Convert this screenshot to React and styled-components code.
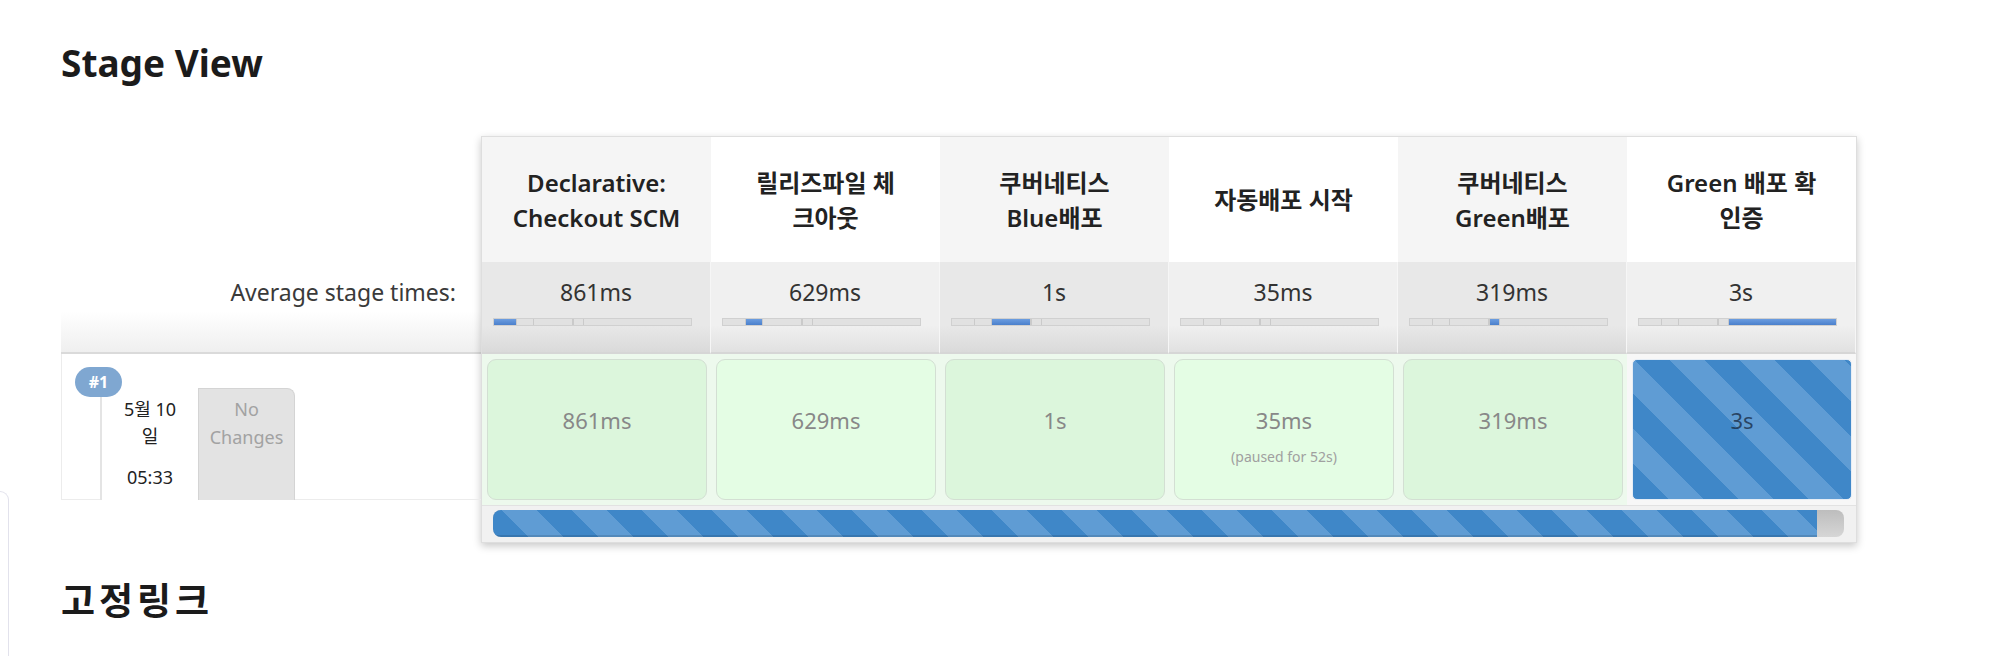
import React from 'react';
import styled, { createGlobalStyle } from 'styled-components';

const GlobalStyle = createGlobalStyle`
  html, body {
    margin: 0;
    padding: 0;
    background: #fff;
  }
  body {
    font-family: "Noto Sans", "Noto Sans CJK KR", sans-serif;
    color: #222;
  }
`;

const stripes = `repeating-linear-gradient(45deg, #3f87c8 0 24.75px, #5f9cd4 24.75px 49.5px)`;

const stages = [
  { name: ['Declarative:', 'Checkout SCM'], avg: '861ms', time: '861ms', width: 11.4 },
  { name: ['릴리즈파일 체', '크아웃'], avg: '629ms', time: '629ms', width: 8.6 },
  { name: ['쿠버네티스', 'Blue배포'], avg: '1s', time: '1s', width: 19.5 },
  { name: ['자동배포 시작'], avg: '35ms', time: '35ms', paused: '(paused for 52s)', width: 0.5 },
  { name: ['쿠버네티스', 'Green배포'], avg: '319ms', time: '319ms', width: 5 },
  { name: ['Green 배포 확', '인증'], avg: '3s', time: '3s', width: 55, running: true },
];

const Page = styled.div`
  display: flex;
  min-height: 656px;
`;

const SidePanel = styled.div`
  flex: 0 0 9px;
  box-sizing: border-box;
  margin-top: 491px;
  border-top: 1px solid #e2e2ec;
  border-right: 1px solid #e2e2ec;
  border-top-right-radius: 14px;
`;

const Main = styled.main`
  flex: 1;
  padding-left: 52px;
`;

const Heading = styled.h2`
  margin: ${p => p.$top}px 0 ${p => p.$bottom}px;
  font-size: 37px;
  line-height: 44px;
  font-weight: 700;
  letter-spacing: ${p => p.$spacing || 0}px;
  color: #1b1b1b;
`;

const StageView = styled.div`
  display: flex;
  align-items: flex-start;
`;

const LeftPane = styled.div`
  flex: 0 0 420px;
`;

const LeftHead = styled.div`
  height: 126px;
`;

const AvgLabel = styled.div`
  height: 92px;
  box-sizing: border-box;
  padding: 15px 25px 0 0;
  text-align: right;
  font-size: 23px;
  line-height: 30px;
  color: #3a3a3a;
  background: linear-gradient(to bottom, #fff 55%, #efefef 100%);
  border-bottom: 2px solid #dadada;
`;

const RunInfo = styled.div`
  position: relative;
  height: 146px;
  box-sizing: border-box;
  display: flex;
  align-items: flex-start;
  padding: 35px 0 0 38px;
  border-left: 1px solid #ececec;
  border-bottom: 1px solid #ececec;
`;

const Badge = styled.span`
  position: absolute;
  left: 13px;
  top: 13px;
  width: 47px;
  height: 30px;
  border-radius: 15px;
  background: #7fa7d1;
  color: #fff;
  font-size: 16px;
  font-weight: 700;
  line-height: 30px;
  text-align: center;
`;

const DateBox = styled.div`
  width: 98px;
  height: 111px;
  box-sizing: border-box;
  padding-top: 7px;
  border-left: 2px solid #e4e4e4;
  background: #fff;
  text-align: center;
  font-size: 18px;
  line-height: 27px;
  color: #222;
`;

const TimeLine = styled.div`
  margin-top: 14px;
`;

const NoChanges = styled.div`
  width: 97px;
  height: 112px;
  margin-top: -1px;
  box-sizing: border-box;
  padding-top: 6px;
  background: #e3e3e3;
  border: 1px solid #d4d4d4;
  border-bottom: none;
  border-top-right-radius: 8px;
  text-align: center;
  font-size: 18px;
  line-height: 28px;
  color: #a2a2a2;
`;

const StageTable = styled.div`
  flex: 0 0 1376px;
  box-sizing: border-box;
  display: grid;
  grid-template-columns: repeat(6, 1fr);
  border: 1px solid #dedede;
  box-shadow: 0 3px 8px rgba(0, 0, 0, 0.22);
  background: #fff;
`;

const HeadCell = styled.div`
  height: 125px;
  box-sizing: border-box;
  padding: 0 10px;
  display: flex;
  flex-direction: column;
  align-items: center;
  justify-content: center;
  text-align: center;
  font-size: 24px;
  line-height: 35px;
  font-weight: 600;
  color: #222;
  white-space: nowrap;
  background: ${p => (p.$odd ? '#f5f5f5' : '#fff')};
`;

const AvgCell = styled.div`
  height: 92px;
  box-sizing: border-box;
  padding-top: 15px;
  text-align: center;
  font-size: 23px;
  line-height: 30px;
  color: #333;
  border-right: 1px solid #f6f6f6;
  border-bottom: 2px solid #d6d6d6;
  background: ${p =>
    p.$odd
      ? 'linear-gradient(to bottom, #e8e8e8 0%, #e8e8e8 70%, #dadada 100%)'
      : 'linear-gradient(to bottom, #f0f0f0 0%, #f0f0f0 70%, #e1e1e1 100%)'};
`;

const Bar = styled.div`
  display: flex;
  height: 8px;
  margin: 11px 18px 0 11px;
  box-sizing: border-box;
  background: #e1e1e1;
  border: 1px solid #d0d0d0;
`;

const Seg = styled.div`
  flex: 0 0 auto;
  min-width: 1px;
  box-sizing: border-box;
  border-left: 1px solid ${p => (p.$first ? 'transparent' : '#cacaca')};
  background: ${p => (p.$active ? 'linear-gradient(#6c9de0, #4b80cc)' : 'transparent')};
`;

const RunCol = styled.div`
  padding: 5px 4px 5px 5px;
  background: ${p => (p.$running ? '#f7f7f7' : '#edf9ed')};
`;

const StageCell = styled.div`
  height: 141px;
  box-sizing: border-box;
  padding-top: 45px;
  border-radius: ${p => (p.$running ? '5px' : '9px')};
  border: 1px solid ${p => (p.$running ? '#e6edf5' : '#d3dfd3')};
  background: ${p => (p.$running ? stripes : p.$odd ? '#dcf6dc' : '#e4fde4')};
  text-align: center;
  color: ${p => (p.$running ? 'rgba(25, 45, 70, 0.78)' : '#888')};
`;

const Duration = styled.div`
  font-size: 22px;
  line-height: 30px;
`;

const Paused = styled.div`
  margin-top: 13px;
  font-size: 14px;
  line-height: 18px;
  color: #a0a0a0;
`;

const ProgressRow = styled.div`
  grid-column: 1 / -1;
  padding: 4px 12px 5px 11px;
  background: #f1f1f1;
  border-top: 1px solid #e2e2e2;
`;

const Track = styled.div`
  display: flex;
  height: 27px;
  border-radius: 8px;
  overflow: hidden;
  background: linear-gradient(#bdbdbd, #d6d6d6);
`;

const Fill = styled.div`
  width: 98%;
  background: ${stripes};
  box-shadow: inset 0 -2px 0 rgba(0, 0, 0, 0.12);
`;

const AvgBar = ({ active }) => (
  <Bar>
    {stages.map((s, i) => (
      <Seg key={i} $first={i === 0} $active={i === active} style={{ width: `${s.width}%` }} />
    ))}
  </Bar>
);

const App = () => (
  <>
    <GlobalStyle />
    <Page>
      <SidePanel />
      <Main>
        <Heading $top={41} $bottom={51}>Stage View</Heading>
        <StageView>
          <LeftPane>
            <LeftHead />
            <AvgLabel>Average stage times:</AvgLabel>
            <RunInfo>
              <Badge>#1</Badge>
              <DateBox>
                5월 10<br />일
                <TimeLine>05:33</TimeLine>
              </DateBox>
              <NoChanges>
                No<br />Changes
              </NoChanges>
            </RunInfo>
          </LeftPane>
          <StageTable>
            {stages.map((s, i) => (
              <HeadCell key={`h${i}`} $odd={i % 2 === 0}>
                {s.name.map(line => (
                  <span key={line}>{line}</span>
                ))}
              </HeadCell>
            ))}
            {stages.map((s, i) => (
              <AvgCell key={`a${i}`} $odd={i % 2 === 0}>
                {s.avg}
                <AvgBar active={i} />
              </AvgCell>
            ))}
            {stages.map((s, i) => (
              <RunCol key={`r${i}`} $running={s.running}>
                <StageCell $odd={i % 2 === 0} $running={s.running}>
                  <Duration>{s.time}</Duration>
                  {s.paused && <Paused>{s.paused}</Paused>}
                </StageCell>
              </RunCol>
            ))}
            <ProgressRow>
              <Track>
                <Fill />
              </Track>
            </ProgressRow>
          </StageTable>
        </StageView>
        <Heading $top={36} $bottom={0} $spacing={4}>고정링크</Heading>
      </Main>
    </Page>
  </>
);

export default App;
